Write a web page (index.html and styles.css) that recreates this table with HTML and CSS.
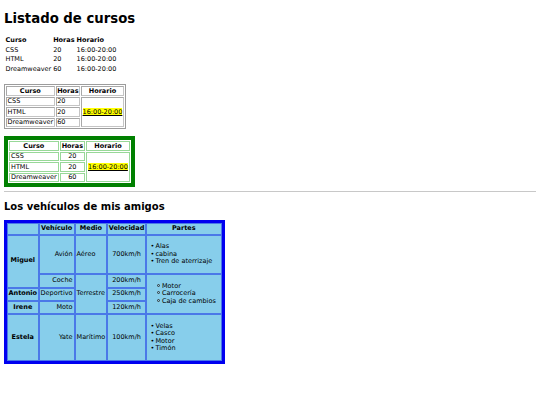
FILE: index.html
```html
<!DOCTYPE html>
<html lang="es">
<head>
<meta charset="utf-8">
<title>Listado de cursos</title>
<link rel="stylesheet" href="styles.css">
</head>
<body class="page">
<h1 class="title">Listado de cursos</h1>
<table class="t-plain">
  <tr><th>Curso</th><th>Horas</th><th>Horario</th></tr>
  <tr><td>CSS</td><td>20</td><td>16:00-20:00</td></tr>
  <tr><td>HTML</td><td>20</td><td>16:00-20:00</td></tr>
  <tr><td>Dreamweaver</td><td>60</td><td>16:00-20:00</td></tr>
</table>

<table class="t-gray">
  <tr><th>Curso</th><th>Horas</th><th>Horario</th></tr>
  <tr><td>CSS</td><td>20</td><td rowspan="3" class="mid"><span class="hl">16:00-20:00</span></td></tr>
  <tr><td>HTML</td><td>20</td></tr>
  <tr><td>Dreamweaver</td><td>60</td></tr>
</table>

<table class="t-green">
  <tr><th>Curso</th><th>Horas</th><th>Horario</th></tr>
  <tr><td>CSS</td><td class="c">20</td><td rowspan="3" class="mid"><span class="hl">16:00-20:00</span></td></tr>
  <tr><td>HTML</td><td class="c">20</td></tr>
  <tr><td>Dreamweaver</td><td class="c">60</td></tr>
</table>

<hr class="sep">

<h2 class="subtitle">Los vehículos de mis amigos</h2>
<table class="t-blue">
  <tr><th></th><th>Vehículo</th><th>Medio</th><th>Velocidad</th><th>Partes</th></tr>
  <tr>
    <th rowspan="2">Miguel</th>
    <td class="r">Avión</td>
    <td>Aéreo</td>
    <td class="c">700km/h</td>
    <td><ul class="parts"><li>Alas</li><li>cabina</li><li>Tren de aterrizaje</li></ul></td>
  </tr>
  <tr>
    <td class="r">Coche</td>
    <td rowspan="3">Terrestre</td>
    <td class="c">200km/h</td>
    <td rowspan="3"><ul class="parts circ"><li>Motor</li><li>Carrocería</li><li>Caja de cambios</li></ul></td>
  </tr>
  <tr><th>Antonio</th><td class="r">Deportivo</td><td class="c">250km/h</td></tr>
  <tr><th>Irene</th><td class="r">Moto</td><td class="c">120km/h</td></tr>
  <tr>
    <th>Estela</th>
    <td class="r">Yate</td>
    <td>Marítimo</td>
    <td class="c">100km/h</td>
    <td><ul class="parts"><li>Velas</li><li>Casco</li><li>Motor</li><li>Timón</li></ul></td>
  </tr>
</table>
</body>
</html>
```

FILE: styles.css
```css
.page {
  margin: 4px;
  font-family: "DejaVu Sans", Verdana, sans-serif;
  font-size: 6.5px;
  color: #000;
  background: #fff;
}
.title { font-size: 13.25px; margin: 7px 0 9px; line-height: 15px; }
.subtitle { font-size: 10px; margin: 9px 0 7px; line-height: 12px; }
table { font-size: 6.5px; line-height: 7.5px; }
th, td { vertical-align: middle; }

.t-plain { border-spacing: 1px; margin: 0 0 10px; }
.t-plain th { text-align: left; }
.t-plain th, .t-plain td { padding: 1px 0.5px 0; }

.t-gray {
  border: 1px solid #9c9c9c;
  border-spacing: 1px;
  margin-bottom: 7px;
}
.t-gray th, .t-gray td {
  border: 1px solid #c4c4c4;
  border-top-color: #a8a8a8;
  border-left-color: #a8a8a8;
  padding: 0.5px 0.5px 0;
  line-height: 7px;
}
.t-gray td { text-align: left; }

.mid { text-align: center; }
.hl { background: #ffff00; text-decoration: underline; }
.c { text-align: center; }
.r { text-align: right; }

.t-green {
  border: 4px solid #008000;
  border-spacing: 1px;
  background: #fff;
  margin-bottom: 4px;
}
.t-green th, .t-green td {
  border: 1px solid #98d898;
  padding: 0.5px 1px 0;
  line-height: 7px;
}

.sep { margin: 0; border: 0; border-top: 1px solid #c8c8c8; height: 0; }

.t-blue {
  border: 3px solid #0000f0;
  background: #4a78e8;
  border-spacing: 0;
}
.t-blue th, .t-blue td {
  background: #87ceeb;
  border: 1px solid #4a78e8;
}
.t-blue td { padding: 1px; }
.t-blue th { padding: 1px 0.5px; text-align: center; }
.parts { margin: 6.5px 0; padding: 0 4px 0 0; list-style: none; }
.parts.circ { padding-left: 6.5px; }
.parts li { line-height: 7.6px; white-space: nowrap; }
.parts li::before {
  content: "•";
  display: inline-block;
  width: 5px;
  margin-left: 2.7px;
}
.parts.circ li::before {
  content: "";
  box-sizing: border-box;
  width: 3px;
  height: 3px;
  margin-right: 2px;
  border: 1px solid #333;
  border-radius: 50%;
  vertical-align: 1px;
}
```
